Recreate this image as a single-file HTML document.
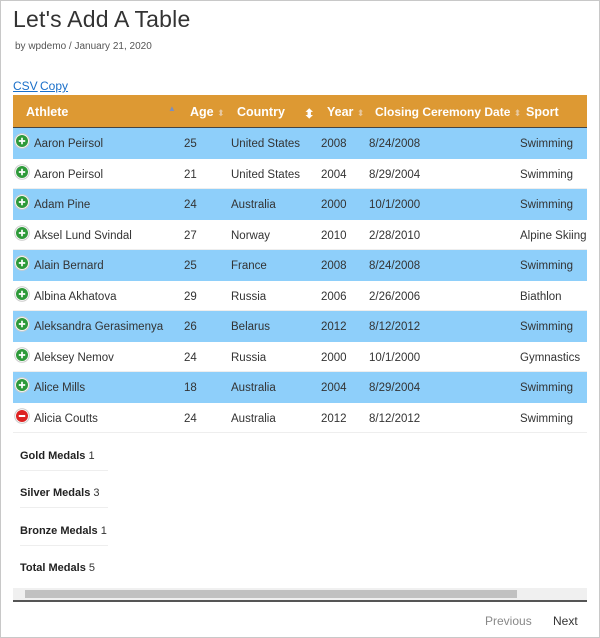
<!DOCTYPE html>
<html><head><style>
*{margin:0;padding:0;box-sizing:border-box}
body{width:600px;height:638px;background:#fff;font-family:"Liberation Sans",sans-serif;color:#333;position:relative;overflow:hidden}
.frame{position:absolute;left:0;top:0;width:600px;height:638px;border:1px solid #c8c8c8}
.a{position:absolute;white-space:nowrap}
h1{position:absolute;left:13px;top:6px;font-size:23px;font-weight:normal;color:#333;letter-spacing:0.2px;white-space:nowrap}
.meta{left:15px;top:41px;font-size:10px;color:#555}
.lnk{top:79px;font-size:12px;color:#1a6fc9;text-decoration:underline}
.hdr{left:13px;top:95px;width:574px;height:33px;background:#dd9933;border-bottom:1px solid #444}
.hdr span{position:absolute;top:10px;color:#fff;font-weight:bold;font-size:12.5px}
.s{color:#e8c9a0;font-size:9px;font-style:normal;font-weight:normal}
.row{position:absolute;left:13px;width:574px;height:30.5px;border-bottom:1px solid #eee}
.row.b{background:#8ecffa;border-bottom:none}
.row span{position:absolute;top:10px;font-size:11.5px;color:#333;white-space:nowrap}
.row svg{position:absolute;left:1px;top:5px}
.md{left:20px;font-size:11px;color:#333}
.md b{color:#222}
.ml{position:absolute;left:20px;width:88px;height:1px;background:#eee}
</style></head><body>
<svg width="0" height="0" style="position:absolute"><defs>
<g id="p"><circle cx="8" cy="8" r="7.3" fill="#fff" stroke="#ccc"/><circle cx="8" cy="8" r="6" fill="#2e9a3a"/><path d="M4.8 8H11.2M8 4.8V11.2" stroke="#fff" stroke-width="1.7"/></g>
<g id="m"><circle cx="8" cy="8" r="7.3" fill="#fff" stroke="#ccc"/><circle cx="8" cy="8" r="6" fill="#d22"/><path d="M4.8 8H11.2" stroke="#fff" stroke-width="2"/></g>
</defs></svg>
<h1>Let's Add A Table</h1>
<div class="a meta">by wpdemo / January 21, 2020</div>
<div class="a lnk" style="left:13px">CSV</div>
<div class="a lnk" style="left:40px">Copy</div>
<div class="a hdr">
<span style="left:13px">Athlete</span><span style="left:155px;top:9px;color:#7a8fc0;font-size:8px">▲</span>
<span style="left:177px">Age <i class="s">⬍</i></span>
<span style="left:224px">Country</span><span class="s" style="left:291px;top:11px">⬍</span>
<span style="left:314px">Year <i class="s">⬍</i></span>
<span style="left:362px;font-size:12px">Closing Ceremony Date <i class="s">⬍</i></span>
<span style="left:513px">Sport</span>
</div>
<div class="row b" style="top:128px"><svg width="16" height="16"><use href="#p"/></svg><span style="left:21px">Aaron Peirsol</span><span style="left:171px">25</span><span style="left:218px">United States</span><span style="left:308px">2008</span><span style="left:356px">8/24/2008</span><span style="left:507px">Swimming</span></div>
<div class="row" style="top:158.5px"><svg width="16" height="16"><use href="#p"/></svg><span style="left:21px">Aaron Peirsol</span><span style="left:171px">21</span><span style="left:218px">United States</span><span style="left:308px">2004</span><span style="left:356px">8/29/2004</span><span style="left:507px">Swimming</span></div>
<div class="row b" style="top:189px"><svg width="16" height="16"><use href="#p"/></svg><span style="left:21px">Adam Pine</span><span style="left:171px">24</span><span style="left:218px">Australia</span><span style="left:308px">2000</span><span style="left:356px">10/1/2000</span><span style="left:507px">Swimming</span></div>
<div class="row" style="top:219.5px"><svg width="16" height="16"><use href="#p"/></svg><span style="left:21px">Aksel Lund Svindal</span><span style="left:171px">27</span><span style="left:218px">Norway</span><span style="left:308px">2010</span><span style="left:356px">2/28/2010</span><span style="left:507px">Alpine Skiing</span></div>
<div class="row b" style="top:250px"><svg width="16" height="16"><use href="#p"/></svg><span style="left:21px">Alain Bernard</span><span style="left:171px">25</span><span style="left:218px">France</span><span style="left:308px">2008</span><span style="left:356px">8/24/2008</span><span style="left:507px">Swimming</span></div>
<div class="row" style="top:280.5px"><svg width="16" height="16"><use href="#p"/></svg><span style="left:21px">Albina Akhatova</span><span style="left:171px">29</span><span style="left:218px">Russia</span><span style="left:308px">2006</span><span style="left:356px">2/26/2006</span><span style="left:507px">Biathlon</span></div>
<div class="row b" style="top:311px"><svg width="16" height="16"><use href="#p"/></svg><span style="left:21px">Aleksandra Gerasimenya</span><span style="left:171px">26</span><span style="left:218px">Belarus</span><span style="left:308px">2012</span><span style="left:356px">8/12/2012</span><span style="left:507px">Swimming</span></div>
<div class="row" style="top:341.5px"><svg width="16" height="16"><use href="#p"/></svg><span style="left:21px">Aleksey Nemov</span><span style="left:171px">24</span><span style="left:218px">Russia</span><span style="left:308px">2000</span><span style="left:356px">10/1/2000</span><span style="left:507px">Gymnastics</span></div>
<div class="row b" style="top:372px"><svg width="16" height="16"><use href="#p"/></svg><span style="left:21px">Alice Mills</span><span style="left:171px">18</span><span style="left:218px">Australia</span><span style="left:308px">2004</span><span style="left:356px">8/29/2004</span><span style="left:507px">Swimming</span></div>
<div class="row" style="top:402.5px"><svg width="16" height="16"><use href="#m"/></svg><span style="left:21px">Alicia Coutts</span><span style="left:171px">24</span><span style="left:218px">Australia</span><span style="left:308px">2012</span><span style="left:356px">8/12/2012</span><span style="left:507px">Swimming</span></div>
<div class="a md" style="top:450px"><b>Gold Medals</b> 1</div><div class="ml" style="top:470px"></div>
<div class="a md" style="top:487px"><b>Silver Medals</b> 3</div><div class="ml" style="top:507px"></div>
<div class="a md" style="top:525px"><b>Bronze Medals</b> 1</div><div class="ml" style="top:545px"></div>
<div class="a md" style="top:562px"><b>Total Medals</b> 5</div>
<div class="a" style="left:13px;top:588px;width:574px;height:12px;background:#f0f0f0"></div>
<div class="a" style="left:25px;top:590px;width:492px;height:8px;background:#c1c1c1"></div>
<div class="a" style="left:13px;top:600px;width:574px;height:2px;background:#555"></div>
<div class="a" style="left:485px;top:614px;font-size:12px;color:#888">Previous</div>
<div class="a" style="left:553px;top:614px;font-size:12px;color:#333">Next</div>
<div class="frame"></div>
</body></html>
